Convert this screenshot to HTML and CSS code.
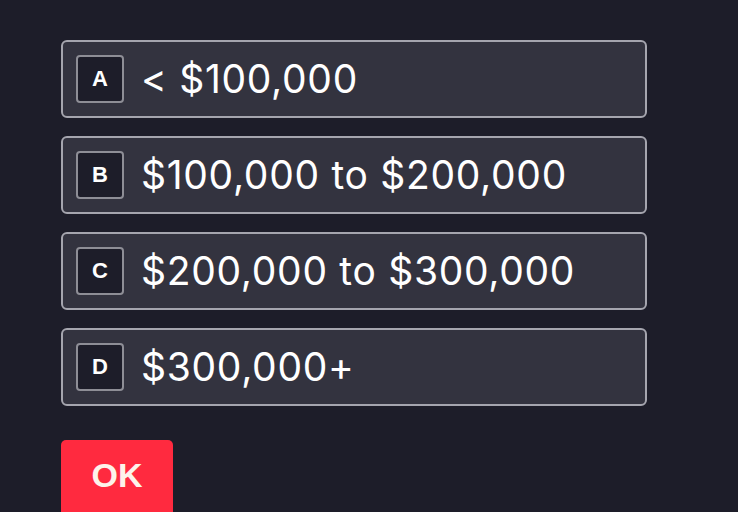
FILE: index.html
```html
<!DOCTYPE html>
<html lang="en">
<head>
    <meta charset="UTF-8">
    <meta name="viewport" content="width=device-width, initial-scale=1.0">
    <title>Budget</title>
    <link rel="stylesheet" href="styles.css">
</head>
<body>
    <div class="question">
        <div class="choices">
            <div class="choice"><span class="key">A</span><span class="label">&lt; $100,000</span></div>
            <div class="choice"><span class="key">B</span><span class="label">$100,000 to $200,000</span></div>
            <div class="choice"><span class="key">C</span><span class="label">$200,000 to $300,000</span></div>
            <div class="choice"><span class="key">D</span><span class="label">$300,000+</span></div>
        </div>
        <button class="ok">OK</button>
    </div>
</body>
</html>
```

FILE: styles.css
```css
body {
    margin: 0;
    background-color: #1d1d29;
    font-family: 'Inter', 'DejaVu Sans', sans-serif;
    color: #fff;
    overflow: hidden;
}

.question {
    padding: 40px 0 0 61px;
    width: 586px;
}

.choices {
    display: flex;
    flex-direction: column;
    gap: 18px;
}

.choice {
    display: flex;
    align-items: center;
    gap: 17px;
    height: 78px;
    box-sizing: border-box;
    padding: 0 13px;
    background-color: #33333f;
    border: 2px solid #a5a5ae;
    border-radius: 6px;
}

.key {
    display: flex;
    align-items: center;
    justify-content: center;
    width: 48px;
    height: 48px;
    box-sizing: border-box;
    border: 2px solid #8e8e96;
    border-radius: 4px;
    background-color: #1d1d29;
    font-family: 'Liberation Sans', Arial, sans-serif;
    font-weight: 700;
    font-size: 22px;
}

.label {
    font-size: 39px;
    font-weight: 400;
    letter-spacing: 0.7px;
    padding-bottom: 2px;
}

.ok {
    margin-top: 34px;
    width: 112px;
    height: 80px;
    padding-bottom: 10px;
    border: none;
    border-radius: 5px;
    background-color: #ff2a3f;
    color: #fdf3ea;
    font-family: 'Liberation Sans', Arial, sans-serif;
    font-weight: 700;
    font-size: 34px;
    text-align: center;
}
```
